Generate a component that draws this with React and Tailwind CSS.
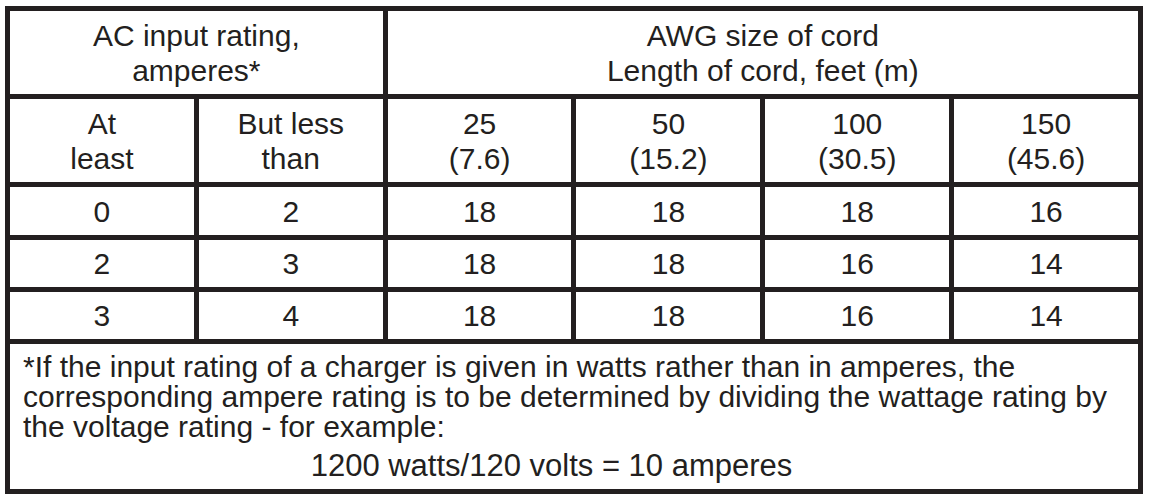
import React from 'react';

const ink = 'text-[#231f20]';

const Cell = ({ children, span = '' }) => (
  <div className={`bg-white flex items-center justify-center text-center leading-[35px] ${span}`}>
    <div>{children}</div>
  </div>
);

const rows = [
  ['0', '2', '18', '18', '18', '16'],
  ['2', '3', '18', '18', '16', '14'],
  ['3', '4', '18', '18', '16', '14'],
];

export default function App() {
  return (
    <div className={`min-h-screen bg-white pt-[6px] pl-[5px] ${ink}`} style={{ fontFamily: '"Liberation Sans", Arial, sans-serif' }}>
      <div className="w-[1138px] bg-[#231f20] p-[5px] grid grid-cols-6 gap-[5px] grid-rows-[83px_83px_48px_47px_47px_145px] text-[30px]">
        {/* Header */}
        <Cell span="col-span-2">
          AC input rating,<br />amperes*
        </Cell>
        <Cell span="col-span-4">
          AWG size of cord<br />Length of cord, feet (m)
        </Cell>

        <Cell>At<br />least</Cell>
        <Cell>But less<br />than</Cell>
        <Cell>25<br />(7.6)</Cell>
        <Cell>50<br />(15.2)</Cell>
        <Cell>100<br />(30.5)</Cell>
        <Cell>150<br />(45.6)</Cell>

        {rows.map((r, i) =>
          r.map((v, j) => <Cell key={`${i}-${j}`}>{v}</Cell>)
        )}

        {/* Footnote */}
        <div className="col-span-6 bg-white pl-[13px] pt-[8px] leading-[30px] whitespace-nowrap">
          <div>*If the input rating of a charger is given in watts rather than in amperes, the</div>
          <div>corresponding ampere rating is to be determined by dividing the wattage rating by</div>
          <div>the voltage rating - for example:</div>
          <div className="mt-[6px] pr-[58px] text-center text-[31px] leading-[36px]">
            1200 watts/120 volts = 10 amperes
          </div>
        </div>
      </div>
    </div>
  );
}
